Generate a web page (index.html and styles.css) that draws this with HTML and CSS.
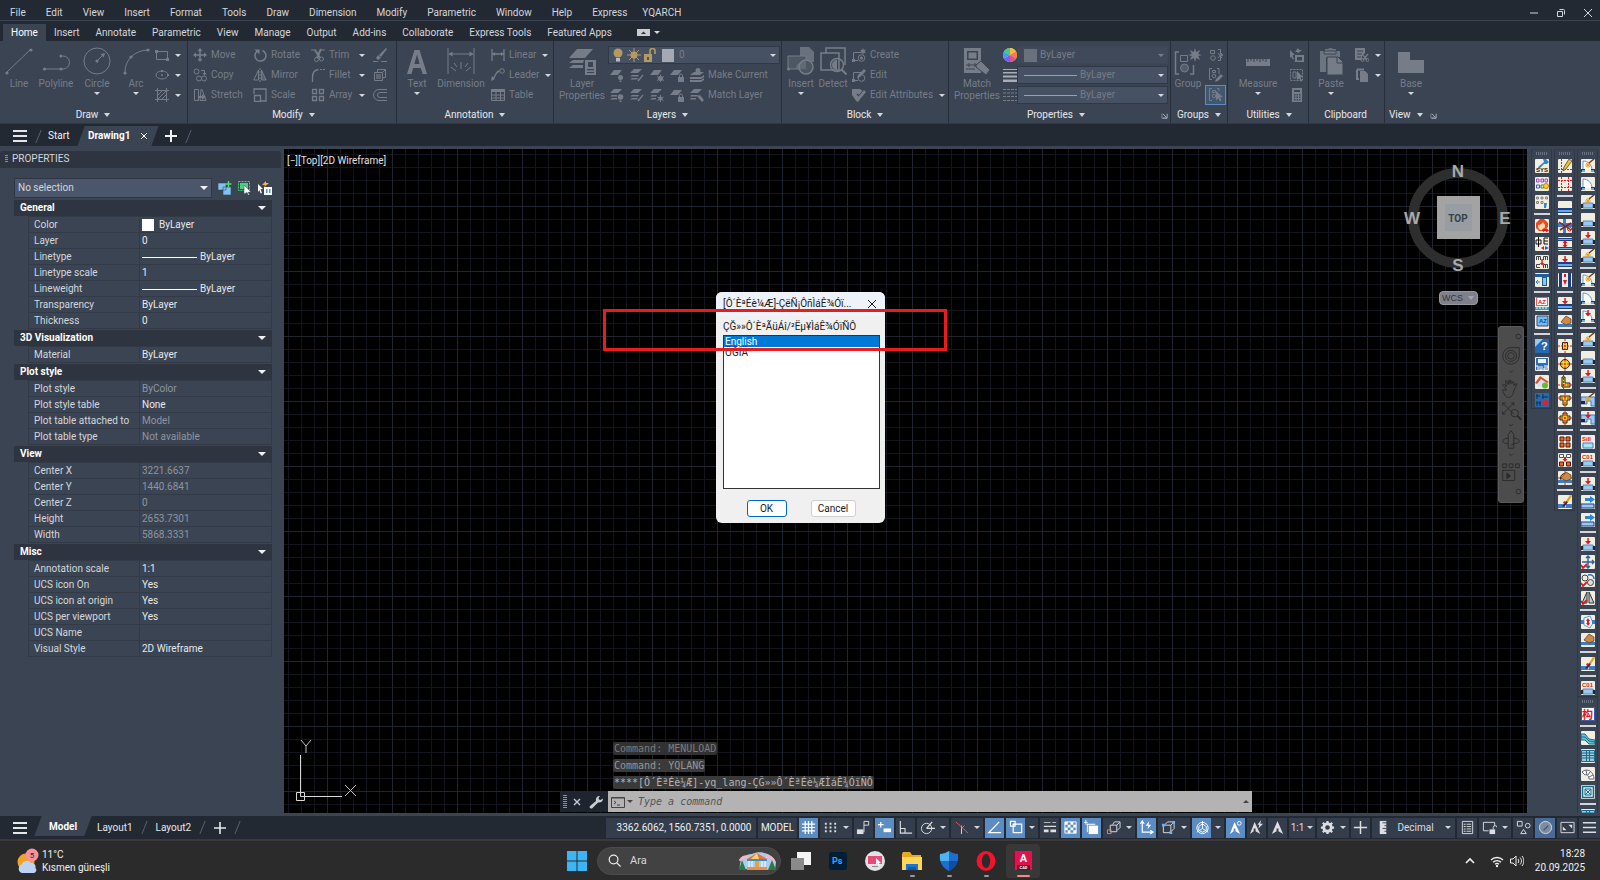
FILE: index.html
```html
<!DOCTYPE html>
<html lang="tr">
<head>
<meta charset="utf-8">
<title>Drawing1</title>
<link rel="stylesheet" href="styles.css">
</head>
<body>
<svg class="defs" aria-hidden="true">
  <!-- ribbon, large -->
  <symbol id="b-line" viewBox="0 0 28 28"><path d="M2 25 25 3" class="s"/><circle cx="2" cy="26" r="1.6"/><circle cx="26" cy="3" r="1.6"/></symbol>
  <symbol id="b-pline" viewBox="0 0 28 28"><path d="M3 22h18a6 6 0 0 0 0-13" class="s"/><circle cx="2.500" cy="22" r="1.600"/><circle cx="19" cy="22" r="1.600"/><circle cx="19" cy="9" r="1.600"/></symbol>
  <symbol id="b-circle" viewBox="0 0 28 28"><circle cx="14" cy="14" r="13" class="s"/><path d="M14 14 20 8" class="s"/><path d="m22 6-1.200 4.500-3.300-3.300z"/><circle cx="14" cy="14" r="1.600"/></symbol>
  <symbol id="b-arc" viewBox="0 0 28 28"><path d="M3 25C3 13 12 4 25 3" class="s"/><circle cx="3" cy="26" r="1.600"/><circle cx="9" cy="10" r="1.600"/><circle cx="26" cy="3" r="1.600"/></symbol>
  <symbol id="b-text" viewBox="0 0 28 28"><path d="M4 27 11.500 3h5L24 27h-4.500l-1.700-6h-7.600l-1.700 6zM11.300 17h5.400L14 7.500z"/></symbol>
  <symbol id="b-dim" viewBox="0 0 28 28"><path d="M1 1v26M27 1v26M2 7h24M14 22v-7M9 24l-5-4M19 24l5-4M10 20l-3-4M18 20l3-4" class="s"/><path d="m1.500 7 4-2.500v5zM26.500 7l-4-2.500v5z"/></symbol>
  <symbol id="b-layers" viewBox="0 0 28 28"><path d="M9 2h16l-8 9H1zM5 13h11l-1 3H1zM5 18h10v3H1zM9 1h16"/><path d="M17 13h11v15H17zM20 15v5h5v-5zM19 22v1.200h7V22zM19 25v1h7v-1z" fill-rule="evenodd"/></symbol>
  <symbol id="b-insert" viewBox="0 0 28 28"><path d="M13 0h9l5 5v10H13z" opacity=".8"/><path d="M1 9h18v13H1z" fill="#4d5663" stroke="currentColor"/><circle cx="19" cy="20" r="7" fill="#4d5663" stroke="currentColor" stroke-width="1.500"/><path d="M19 22H9a10 7 0 0 1 10-8z" opacity=".5"/><circle cx="1.500" cy="22" r="1.500"/></symbol>
  <symbol id="b-detect" viewBox="0 0 28 28"><path d="M7 6V1h19v17M2 6h18v17H2z" class="s" stroke-width="1.500"/><circle cx="18" cy="18" r="6.500" class="s" stroke-width="1.500"/><path d="m22.500 22.500 5 5" class="s" stroke-width="2"/><path d="M18 13v10a5 5 0 0 1 0-10z"/></symbol>
  <symbol id="b-match" viewBox="0 0 28 28"><path d="M1 1h17v25H1zM4 4v9h11V4z" fill-rule="evenodd"/><path d="M5.500 5.500h8v6h-8z"/><path d="M3 18h13M3 22h9" stroke="#3b4453"/><path d="M6 16v4M12 16v4" stroke="#3b4453"/><path d="m13 18 5-4 9 9-4 5-10-8z" stroke="#3b4453"/></symbol>
  <symbol id="b-group" viewBox="0 0 28 28"><path d="M5 5H1.500v22H5M16 27h3.500V18" class="s" stroke-width="1.500"/><path d="M6.500 8.500h7v6h-7z" class="s"/><circle cx="10.500" cy="21" r="4" fill="#545d6a" stroke="currentColor"/><path d="m21 1 1.200 4 4-2-2 4 3.800 1-3.800 1 2 4-4-2-1.200 4-1.200-4-4 2 2-4-3.800-1 3.800-1-2-4 4 2z"/></symbol>
  <symbol id="b-measure" viewBox="0 0 28 28"><path d="M2 12h24v7H2z"/><path d="M4 12v3M7 12v2M10 12v3M13 12v2M16 12v3M19 12v2M22 12v3" stroke="#3b4453"/></symbol>
  <symbol id="b-paste" viewBox="0 0 28 28"><path d="M3 4h5V2h3a3 2 0 0 1 5 0h3v2h4v6H9v15H3z" opacity=".85"/><path d="M7 4h12v3H7z" stroke="#3b4453"/><path d="M10 10h11l5 5v13H10z" stroke="#3b4453"/><path d="M20 10v6h6" stroke="#3b4453" fill="none"/></symbol>
  <symbol id="b-base" viewBox="0 0 28 28"><path d="M1 5h12v8h14v13H1z"/></symbol>
  <!-- ribbon, small -->
  <symbol id="s-rect" viewBox="0 0 14 14"><path d="M1.500 3.500h11v8h-11z" class="s"/><path d="M0 2h3v3H0zM11 10h3v3h-3z"/></symbol>
  <symbol id="s-ell" viewBox="0 0 14 14"><ellipse cx="7" cy="7" rx="6" ry="4" class="s"/><circle cx="7" cy="7" r="1"/><path d="M6 2h2v2H6zM12 6h2v2h-2z"/></symbol>
  <symbol id="s-hatch" viewBox="0 0 14 14"><path d="M2.500 2.500h9v9h-9zM0 2.500h14M0 11.500h14M2.500 0v14M11.500 0v14M3 7l4-4M3 11l8-8M7 11l4-4" class="s"/></symbol>
  <symbol id="s-move" viewBox="0 0 14 14"><path d="M7 1v12M1 7h12" class="s" stroke-width="1.500"/><path d="m7 0 2.500 3h-5zM7 14l2.500-3h-5zM0 7l3-2.500v5zM14 7l-3-2.500v5z"/></symbol>
  <symbol id="s-copy" viewBox="0 0 14 14"><circle cx="3.500" cy="3.500" r="2.500" class="s"/><circle cx="6" cy="10.500" r="2.500" class="s"/><circle cx="11" cy="10.500" r="2.500" class="s"/><path d="M8 2.500h3.500V6" class="s"/><path d="m11.500 7.500-2-2.500h4z"/></symbol>
  <symbol id="s-stretch" viewBox="0 0 14 14"><path d="M1.500 1.500h4v11h-4zM8 1.500h1l4 11H7z" class="s"/><path d="M5 8h4V6l4 3-4 3v-2H5z"/></symbol>
  <symbol id="s-rotate" viewBox="0 0 14 14"><path d="M9.500 2.500A5.500 5.500 0 1 1 4 3.300" class="s" stroke-width="1.500"/><path d="M1.500 1.500h5v5z"/></symbol>
  <symbol id="s-mirror" viewBox="0 0 14 14"><path d="M5.500 2v10H.8zM8.500 2v10h4.700z" class="s"/><path d="M8.500 2v10h4.700z" opacity=".5"/><path d="M7 0v14" class="s" stroke-dasharray="2 1"/></symbol>
  <symbol id="s-scale" viewBox="0 0 14 14"><path d="M1 6V1h12v12H8M1.500 7.500h6v6h-6z" class="s" stroke-width="1.300"/></symbol>
  <symbol id="s-trim" viewBox="0 0 14 14"><path d="M0 2h5M10 2h4" class="s"/><path d="m4 2 5 8M10 1 6 10" class="s" stroke-width="2"/><circle cx="5.500" cy="11.500" r="2" class="s"/><circle cx="10.500" cy="11" r="2" class="s"/></symbol>
  <symbol id="s-fillet" viewBox="0 0 14 14"><path d="M1.500 14V9c0-4 2-7 6-7.500" class="s" stroke-width="1.300"/><path d="M9 1.500h5" class="s" stroke-dasharray="2 1"/></symbol>
  <symbol id="s-array" viewBox="0 0 14 14"><path d="M1.500 1.500h4v4h-4zM8.500 1.500h4v4h-4zM1.500 8.500h4v4h-4zM8.500 8.500h4v4h-4z" class="s" stroke-width="1.300"/></symbol>
  <symbol id="s-erase" viewBox="0 0 14 14"><path d="M0 13h4l2 1H0zM8 13h6v1H8z"/><path d="m13 0 1 1-6 8-2-2zM5 7l3 3-3 2-2-2z"/></symbol>
  <symbol id="s-box" viewBox="0 0 14 14"><path d="M1.500 4.500h8v8h-8zM4.500 4V1.500h8v8H10M9.500 4.500l3-3" class="s"/><path d="M3 6h5v5H3z" opacity=".6"/></symbol>
  <symbol id="s-offset" viewBox="0 0 14 14"><path d="M14 1.500H6a5 5 0 0 0 0 11h8M14 4.500H7a2.500 2.500 0 0 0 0 5h7" class="s"/></symbol>
  <symbol id="s-linear" viewBox="0 0 14 14"><path d="M1 1v12M13 1v12M1 6h12" class="s" stroke-width="1.300"/><path d="m1 6 3-2v4zM13 6l-3-2v4z"/></symbol>
  <symbol id="s-leader" viewBox="0 0 14 14"><circle cx="11" cy="3" r="2.300" class="s"/><path d="M8.500 3C5 3 5 7 2 11" class="s" stroke-width="1.300"/><path d="m0 13 1-5 3 3z"/></symbol>
  <symbol id="s-table" viewBox="0 0 14 14"><path d="M0 1h14v3H0z"/><path d="M.5 1.500h13v11H.5zM.5 7h13M.5 10h13M5 4v9M9.500 4v9" class="s"/></symbol>
  <symbol id="s-lay" viewBox="0 0 14 14"><path d="M4 2h8L8 7H0z"/><circle cx="10.500" cy="9.500" r="2.500"/><path d="M9.500 12.500h2V14h-2z"/></symbol>
  <symbol id="s-layon" viewBox="0 0 14 14"><path d="M4 1h8L8 5H0zM2 7h5v1.500H0zM2 10h5v1.500H0z"/><circle cx="10.500" cy="9" r="2.800"/><path d="M9.500 12.500h2V14h-2z"/></symbol>
  <symbol id="s-lay2" viewBox="0 0 14 14"><path d="M4 1h8L8 5H0zM2 7h7l-1 1.500H0zM2 10h6l-1 1.500H0z"/><path d="m13 7-5 6M8 13l1-2" class="s" stroke-width="1.300"/></symbol>
  <symbol id="s-lay3" viewBox="0 0 14 14"><path d="M4 2h8L8 7H0z"/><circle cx="10.500" cy="10.500" r="2.500"/><path d="M10.500 6.500v7.500M7 8.500l7 4M7 12.500l7-4" class="s"/></symbol>
  <symbol id="s-thaw" viewBox="0 0 14 14"><path d="M4 1h8L8 5H0zM2 7h5L6 8.500H0zM2 10h4v1.500H0z"/><circle cx="10.500" cy="10.500" r="2"/><path d="M10.500 7v7M7.500 9l6 3.500M7.500 12.500l6-3.500" class="s"/></symbol>
  <symbol id="s-lay4" viewBox="0 0 14 14"><path d="M4 2h8L8 7H0zM8 9h6v5H8z"/><path d="M9.500 9V7.500a1.500 1.500 0 0 1 3 0V9" class="s"/></symbol>
  <symbol id="s-make" viewBox="0 0 14 14"><path d="M4 4h10l-4 3H0zM0 9h11l3-2v2l-3 2H0zM0 12h11l3-2v2l-3 2H0z"/><circle cx="8" cy="2.500" r="2.500"/></symbol>
  <symbol id="s-matchl" viewBox="0 0 14 14"><path d="M4 1h8L8 5H0zM1 7h7l-1 1.500H0zM1 10h5v1.500H0zM7 8l3-1 4 5-2 2z"/></symbol>
  <symbol id="s-create" viewBox="0 0 14 14"><path d="M9 4.500H1.500v8H6" class="s"/><circle cx="9.500" cy="10" r="3.300" class="s"/><circle cx="9.500" cy="10" r="1.500"/><path d="m11 0 .8 2 2-.5-1 2 1 1.500-2-.3L11 7l-.8-2.300-2 .3 1-1.500-1-2 2 .5z"/><path d="M0 11h3v3H0z"/></symbol>
  <symbol id="s-edit" viewBox="0 0 14 14"><path d="M9 4.500H1.500v8H6" class="s"/><circle cx="9.500" cy="10" r="3.300" class="s"/><path d="m12 1 2 2-6 6-3 1 1-3z"/><path d="M0 11h3v3H0z"/></symbol>
  <symbol id="s-attr" viewBox="0 0 14 14"><path d="M0 1h8l4 3-5 9-2 1L0 7z"/><path d="m5 6 2 2 5-6" stroke="#3b4453" stroke-width="1.500" fill="none"/><path d="m12 2 2 2-5 6-3 1 1-3z"/></symbol>
  <symbol id="s-lw" viewBox="0 0 14 14"><path d="M0 1h14v1H0zM0 4h14v1.500H0zM0 7.500h14v2H0zM0 11.500h14V14H0z"/></symbol>
  <symbol id="s-lt" viewBox="0 0 14 14"><path d="M0 1.500h14M0 5h14M0 8.500h14M0 12.500h14" class="s" stroke-dasharray="3 1"/></symbol>
  <symbol id="s-wheel" viewBox="0 0 14 14"><circle cx="7" cy="7" r="7" fill="#e8e04a"/><path d="M7 7V0a7 7 0 0 1 6 3.500z" fill="#f7b84b"/><path d="m7 7 6-3.500a7 7 0 0 1 0 7z" fill="#f57c4a"/><path d="m7 7 6 3.500A7 7 0 0 1 7 14z" fill="#e0508c"/><path d="M7 7v7a7 7 0 0 1-6-3.500z" fill="#7a5cf0"/><path d="m7 7-6 3.500a7 7 0 0 1 0-7z" fill="#3c9ef2"/><path d="M7 7 1 3.500A7 7 0 0 1 7 0z" fill="#43c78b"/></symbol>
  <symbol id="s-ungroup" viewBox="0 0 14 14"><path d="M1.500 2.500h4v3h-4zM9 1.500h2.500v4.500L14 7l-2.500 1v4.500H9M9 5l4 5M13 5l-4 5" class="s"/><circle cx="4" cy="10" r="2.300" class="s"/></symbol>
  <symbol id="s-gedit" viewBox="0 0 14 14"><path d="M3 .5H.5v11H3M8 .5h2V6M3.500 2.500h3v2h-3z" class="s"/><circle cx="5" cy="8" r="1.800" class="s"/><path d="m12 6 2 2-5 5-3 1 1-3z"/></symbol>
  <symbol id="s-gsel" viewBox="0 0 14 14"><path d="M3 .5H.5v12H3M8 .5h2V3M3.500 2.500h3v2h-3z" class="s"/><circle cx="5" cy="8" r="1.800" class="s"/><path d="m7 3 7 6-3 .5 1.500 3-1.500 1-1.700-3.200L7 12.500z"/></symbol>
  <symbol id="s-qsel" viewBox="0 0 14 14"><path d="m0 2 5 5-2.500.3L4 11l-1.300.6-1.400-3L0 10zM5 7h9v7H5z"/><path d="M7 9h5v3.500H7z" fill="#3b4453"/><path d="M8 0 5 4h3L7 6l5-4H9z"/></symbol>
  <symbol id="s-selall" viewBox="0 0 14 14"><path d="M.5 1.500h12v11H.5z" class="s" stroke-dasharray="2 1"/><path d="M3 4h3v6H3z" class="s"/><path d="m7 3 6 6-2.500.3L12 13l-1.300.6-1.400-3L7 12z"/></symbol>
  <symbol id="s-calc" viewBox="0 0 14 14"><path d="M2 0h10v14H2z"/><path d="M4 2h6v2H4zM4 6h1.500v1.500H4zM6.500 6H8v1.500H6.500zM9 6h1.500v1.500H9zM4 8.500h1.500V10H4zM6.500 8.500H8V10H6.500zM9 8.500h1.500V10H9zM4 11h1.500v1.500H4zM6.500 11H8v1.500H6.500zM9 11h1.500v1.500H9z" fill="#3b4453"/></symbol>
  <symbol id="s-cut" viewBox="0 0 14 14"><path d="M0 0h10v5L7 8v4H0z"/><path d="M2 3h6M2 6h5M2 9h4" stroke="#3b4453"/><path d="m7 6 5 6M13 6l-5 6" class="s" stroke-width="1.300"/><circle cx="7.500" cy="12" r="1.500" class="s"/><circle cx="12.500" cy="12" r="1.500" class="s"/></symbol>
  <symbol id="s-cpy" viewBox="0 0 14 14"><path d="M2 1.500V11h2M2 1.500h7" class="s" stroke-width="2"/><path d="M5 3h5l3 3v8H5z"/></symbol>
  <symbol id="s-launch" viewBox="0 0 8 8"><path d="M1 2v5h6" class="s" opacity=".6"/><path d="M2 2l4 4M7 2v5H2" class="s"/></symbol>
  <!-- right hand tool columns -->
  <symbol id="t-door" viewBox="0 0 14 14"><path d="M2 11V2c5 0 9 4 9 9" fill="#fff" stroke="#5b9bd5"/><path d="M0 10h4v3H0zM10 10h4v3h-4z" fill="#334"/><path d="M1 11h3v2H1zM10 11h3v2h-3z" fill="#6fa8dc"/></symbol>
  <symbol id="t-star" viewBox="0 0 14 14"><path d="M7 3v6M4 6h6M5 4l4 4M9 4 5 8" stroke="#f0a020"/><path d="m8 4 5-4" stroke="#7a3b1c" stroke-width="1.500"/></symbol>
  <symbol id="t-wall" viewBox="0 0 14 14"><path d="M2 8h10v5H2z" fill="#9cc7ee" stroke="#4a8ac4"/><path d="M0 9h2v4H0zM12 9h2v4h-2z" fill="#223"/></symbol>
  <symbol id="t-down" viewBox="0 0 14 14"><path d="M6.300 1h1.500v3H10L7 7.500 4 4h2.300z" fill="#e8141c"/></symbol>
  <symbol id="t-h" viewBox="0 0 14 14"><path d="M0 7h14v2H0zM0 11h14v1H0z" fill="#16408a"/><path d="M0 9h14v2H0z" fill="#6fa8dc"/></symbol>
  <symbol id="t-hh" viewBox="0 0 14 14"><path d="M0 1h14v3H0zM0 10h14v3H0z" fill="#16408a"/><path d="M0 2h14v1H0zM0 11h14v1H0z" fill="#6fa8dc"/><path d="m7 3 2.500 3H8v2h1.500L7 11 4.500 8H6V6H4.500z" fill="#e8141c"/></symbol>
  <symbol id="t-vv" viewBox="0 0 14 14"><path d="M1 0h3v14H1zM10 0h3v14h-3z" fill="#16408a"/><path d="M6 1h2v3H6zM5 7h4L7 12z" fill="#e8141c"/></symbol>
  <symbol id="t-brush" viewBox="0 0 14 14"><path d="M0 9h6l2 4H0zM8 9h6v4H8z" fill="#3c7cc8"/><path d="m12 0 2 1-4 6-2-1z" fill="#e8a020"/><path d="m8 6 2 1-3 4-3 1z" fill="#2b2b2b"/><path d="m6 6 2 1-1 2-2-1z" fill="#e8141c"/></symbol>
  <symbol id="t-grid" viewBox="0 0 14 14"><path d="M0 3.500h14M0 10.500h14M3.500 0v14M10.500 0v14" stroke="#e8141c" stroke-dasharray="2 1"/></symbol>
  <symbol id="t-pencil" viewBox="0 0 14 14"><path d="M3.500 0v14M0 10.500h14" stroke="#e8141c" stroke-dasharray="2 1"/><path d="m11 0 3 2-6 8-3 2 1-4z" fill="#f0c030" stroke="#333" stroke-width=".7"/></symbol>
  <symbol id="t-hand" viewBox="0 0 14 14"><path d="M0 9h14v3H0z" fill="#3c7cc8"/><path d="m3 7 5-6 5 3v4l-5 2z" fill="#c98a4a" stroke="#5a3412" stroke-width=".7"/></symbol>
  <symbol id="t-cross" viewBox="0 0 14 14"><path d="M5 2h4v3h3v4H9v3H5V9H2V5h3z" fill="#f0c020" stroke="#222"/><path d="M0 7h14M7 0v14" stroke="#e8141c" stroke-dasharray="2 1"/></symbol>
  <symbol id="t-sq" viewBox="0 0 14 14"><path d="M4.500 3.500h5v7h-5z" fill="#f0d820" stroke="#222"/><path d="M0 7h14M7 0v14" stroke="#e8141c" stroke-dasharray="2 1"/></symbol>
  <symbol id="t-circ" viewBox="0 0 14 14"><circle cx="7" cy="7" r="4.500" fill="#f0d820" stroke="#222"/><path d="M0 7h14M7 0v14" stroke="#e8141c" stroke-dasharray="2 1"/></symbol>
  <symbol id="t-l" viewBox="0 0 14 14"><path d="M4 2h3v6h5v4H4z" fill="#f0d820" stroke="#222"/><path d="M0 10h14M5.500 0v14" stroke="#e8141c" stroke-dasharray="2 1"/></symbol>
  <symbol id="t-t" viewBox="0 0 14 14"><path d="M2 3h10v4H9v5H5V7H2z" fill="#f0d820" stroke="#222"/><path d="M0 5h14M7 0v14" stroke="#e8141c" stroke-dasharray="2 1"/></symbol>
  <symbol id="t-four" viewBox="0 0 14 14"><path d="M2 2h4v4H2zM8 2h4v4H8zM2 8h4v4H2zM8 8h4v4H8z" fill="#e86a20" stroke="#5a1408"/></symbol>
  <symbol id="t-three" viewBox="0 0 14 14"><path d="M1.500 1.500h4v3h-4zM8.500 1.500h4v3h-4z" fill="#fff" stroke="#555"/><path d="M1.500 9h4v4h-4zM8.500 9h4v4h-4z" fill="#e86a20" stroke="#5a1408"/><path d="M6 4h2v2h1.500L7 9 4.500 6H6z" fill="#e8141c"/></symbol>
  <symbol id="t-scis" viewBox="0 0 14 14"><path d="M0 4h14v4H0zM5 0h3v14H5z" fill="#3c7cc8"/><path d="m1 3 12 8M2 11l11-7" stroke="#8a2010" stroke-width="1.500"/><circle cx="11.500" cy="10" r="2" fill="none" stroke="#e8141c"/></symbol>
  <symbol id="t-wrench" viewBox="0 0 14 14"><path d="m3 8 6-5-1-3h3l3 3-2 2-3 0-5 5z" fill="#2c86d8"/></symbol>
  <symbol id="t-blocks" viewBox="0 0 14 14"><path d="M1.500 2h2.500v3H1.500zM6 2h2.500v3H6zM10 2h2.500v3H10z" fill="none" stroke="#a040c0"/><path d="M1.500 8h3v3h-3z" fill="none" stroke="#2a60d0"/><path d="M6 8h2.500v3H6z" fill="none" stroke="#209040"/><circle cx="11" cy="9" r="2.500" fill="#ffd020" stroke="#d08010"/></symbol>
  <symbol id="t-blocks2" viewBox="0 0 14 14"><path d="M1.500 2h2v2h-2zM6 2h2v2H6zM10.500 2h2v2h-2zM1.500 6.500h2v2h-2zM6 6.500h2v2H6z" fill="#ccc" stroke="#888"/><path d="M9 8h3l-1 5H9z" fill="#2c86d8"/></symbol>
  <symbol id="t-face" viewBox="0 0 14 14"><path d="M1 9V4l4-4h4l4 4v4l-5 4H4z" fill="#e84a20"/><path d="M3 6c3 0 4-2 5-3 1 2 2 2 2 4 0 2-2 4-4 4S3 9 3 6z" fill="#ffd8b0"/><path d="m7 11 2-2v1h2V9l3 2.500-3 2V12H9v1.500z" fill="#e8141c"/></symbol>
  <symbol id="t-zh" viewBox="0 0 14 14"><path d="M1 3h5v4H1zM3.500 0v10M9 1h4M9 4h4M9 7h4M9 1v6" stroke="#111" fill="none"/><path d="m6 11 3-2v4z" fill="#e8141c"/><path d="m14 11-4-2v4z" fill="#2c60d8"/></symbol>
  <symbol id="t-mm" viewBox="0 0 14 14"><path d="M1.500 5V1.500h4V5M3.500 2v3M8.500 5V1.500h4V5M10.500 2v3M5 9.500H1.500v3H5M8.500 13V9.500h4V13M10.500 10v3" stroke="#444" fill="none"/><path d="M6.300 4h1.500v4h1.500L7 10.500 4.700 8h1.600z" fill="#e8141c"/></symbol>
  <symbol id="t-panel" viewBox="0 0 14 14"><path d="M0 1h14v3H0zM7 4h5v9H7z" fill="#1c5f9c"/><path d="M8 5h3v7H8z" fill="#8ec6ee"/><path d="M1 9h4M3 7 1 9l2 2" stroke="#2c86d8" fill="none"/></symbol>
  <symbol id="t-az" viewBox="0 0 14 14"><path d="M1.500.500h11v8h-11z" fill="#fff" stroke="#e8141c" stroke-width=".7"/><path d="M0 10h14v3H0z" fill="#2c9cc8"/><path d="M2 10v2M5 10v2M8 10v2M11 10v2" stroke="#fff"/></symbol>
  <symbol id="t-az2" viewBox="0 0 14 14"><path d="M2 1h11v10H2z" fill="#6fc0ee" stroke="#446"/><path d="m0 14 3-3v3z"/></symbol>
  <symbol id="t-help" viewBox="0 0 14 14"><path d="M0 0h14v14H0z" fill="#2868b0"/><path d="M0 0h8L0 8z" fill="#9cc7ee"/></symbol>
  <symbol id="t-save" viewBox="0 0 14 14"><path d="M1 1h12v12H1z" fill="#2f6fb8"/><path d="M3 2h8v4H3z" fill="#e8f2fb"/><path d="M0 9h3v4M5 9v4h2V9M9 9h4v2H9v2h4" stroke="#fff" fill="none"/></symbol>
  <symbol id="t-house" viewBox="0 0 14 14"><path d="M1 8 6 2l7 5v5H3z" fill="#cfe3f5"/><path d="M0 8 5 1l9 6-2 1-6-4-4 5z" fill="#e0502a"/><circle cx="10" cy="10.500" r="3" fill="#6cb82c"/></symbol>
  <symbol id="t-blue" viewBox="0 0 14 14"><path d="M0 0h14v14H0z" fill="#2a6aa8"/><path d="M2 1v5M1 3h4M8 1v5M7 4h6M2 8v5M5 8v5M1 10h5" stroke="#0c3060"/><circle cx="10.500" cy="10" r="3" fill="#e02030"/></symbol>
  <symbol id="t-corner" viewBox="0 0 14 14"><path d="M0 7V4h14v9h-4V8H6v3H0z" fill="#9cc7ee" stroke="#3c7cc8"/><path d="M0 8h4v3H0z" fill="#223"/></symbol>
  <symbol id="t-sill" viewBox="0 0 14 14"><path d="M2 8h10v5H2z" fill="#a8e4f4" stroke="#3c7cc8"/></symbol>
  <symbol id="t-right" viewBox="0 0 14 14"><path d="M4 3h5V1l5 3.500L9 8V6H4z" fill="#2c86d8"/><path d="M0 9h13v4H0z" fill="#9cc7ee" stroke="#16408a"/></symbol>
  <symbol id="t-mv" viewBox="0 0 14 14"><path d="M7 1v12M1 7h12M5 3l2-2 2 2M11 5l2 2-2 2M5 11l2 2 2-2" stroke="#2f5f98" fill="none" stroke-width="1.400"/><path d="m0 10 2 3 4-4" stroke="#e8141c" fill="none" stroke-width="1.800"/></symbol>
  <symbol id="t-rot" viewBox="0 0 14 14"><circle cx="4" cy="5" r="3" fill="none" stroke="#444"/><circle cx="9.500" cy="9.500" r="3" fill="#ddd" stroke="#444"/><path d="M7 2c4-1 6 1 6 4" stroke="#2f6fb8" fill="none" stroke-width="1.500"/><path d="m0 10 2 3 4-4" stroke="#e8141c" fill="none" stroke-width="1.800"/></symbol>
  <symbol id="t-mir" viewBox="0 0 14 14"><path d="M6 1v11H1zM8 1v11h5z" fill="#bcd" stroke="#333"/><path d="m0 10 2 3 4-4" stroke="#e8141c" fill="none" stroke-width="1.800"/></symbol>
  <symbol id="t-ru" viewBox="0 0 14 14"><path d="M3 3 9 1l3 7-3 5-6-3z" fill="#fff" stroke="#5b9bd5"/><path d="M0 5h3v4H0zM11 5h3v4h-3z" fill="#3c7cc8"/><path d="m7 3 2 3H8v2h1l-2 3-2-3h1V6H5z" fill="#e8141c"/></symbol>
  <symbol id="t-stair" viewBox="0 0 14 14"><path d="m0 3 4 0 4 5 6 1v4H8L4 9H0z" fill="#5cc8e0" stroke="#1c6a88"/><path d="m0 6 4 0 4 4 6 1" stroke="#1c6a88" fill="none"/></symbol>
  <symbol id="t-stairs2" viewBox="0 0 14 14"><path d="M.5 1.500h13v11H.5z" fill="#9ccbe0" stroke="#1c6a88"/><path d="M0 4h14M0 6.500h14M0 9h14M5.500 1v12M8.500 1v12" stroke="#1c6a88"/></symbol>
  <symbol id="t-fan" viewBox="0 0 14 14"><path d="M1 5C6 0 13 5 13 12H8C8 9 6 7 4 8z" fill="#fff" stroke="#667"/><path d="m5 3 1 5M9 5 7 8M12 8 8 10" stroke="#667"/></symbol>
  <symbol id="t-lift" viewBox="0 0 14 14"><path d="M1.500 1.500h11v11h-11z" fill="#d8eef8" stroke="#1c6a88" stroke-width="1.500"/><path d="m4 4 6 6M10 4l-6 6M4 4h6v6H4z" stroke="#1c6a88" fill="none"/></symbol>
  <!-- status bar -->
  <symbol id="u-grid" viewBox="0 0 16 16"><path d="M4.500 1v14M8 1v14M11.500 1v14M1 4.500h14M1 8h14M1 11.500h14" class="s" stroke-width="1.300"/></symbol>
  <symbol id="u-dots" viewBox="0 0 16 16"><path d="M2 3h2v2H2zM7 3h2v2H7zM12 3h2v2h-2zM2 7h2v2H2zM7 7h2v2H7zM12 7h2v2h-2zM2 11h2v2H2zM7 11h2v2H7zM12 11h2v2h-2z"/></symbol>
  <symbol id="u-infer" viewBox="0 0 16 16"><path d="M1 10h7v5H1z"/><path d="M8.500 13V1.500h5v4h-5" class="s"/></symbol>
  <symbol id="u-dyn" viewBox="0 0 16 16"><path d="M1 5h6M4 2v6" class="s" stroke-width="1.300"/><path d="M7 9h8v4H7z"/></symbol>
  <symbol id="u-ortho" viewBox="0 0 16 16"><path d="M2.500 1v13H15M2.500 9h5v5" class="s" stroke-width="1.200"/></symbol>
  <symbol id="u-polar" viewBox="0 0 16 16"><circle cx="7" cy="9" r="5.500" class="s"/><path d="M7 9h9M7 9l6-7" class="s" stroke-width="1.300"/></symbol>
  <symbol id="u-iso" viewBox="0 0 16 16"><path d="M8 6v9" class="s"/><path d="m2 2 13 12" stroke="#e05a5a"/><path d="m11 6-3 3" stroke="#5ac85a"/></symbol>
  <symbol id="u-ang" viewBox="0 0 16 16"><path d="M13 2 2 13.500h13" class="s" stroke-width="1.400"/></symbol>
  <symbol id="u-osnap" viewBox="0 0 16 16"><path d="M4.500 4.500h9v9h-9zM1.500 1.500h5v5h-5z" class="s" stroke-width="1.300"/></symbol>
  <symbol id="u-lw" viewBox="0 0 16 16"><path d="M2 2h7v1H2zM11 2h4v1h-4zM2 6h13v1.500H2zM2 10h5v3H2zM9 10h6v3H9z"/></symbol>
  <symbol id="u-trans" viewBox="0 0 16 16"><path d="M2 2h12v12H2z" class="s"/><path d="M2 2h3v3H2zM8 2h3v3H8zM5 5h3v3H5zM11 5h3v3h-3zM2 8h3v3H2zM8 8h3v3H8zM5 11h3v3H5zM11 11h3v3h-3z"/></symbol>
  <symbol id="u-cyc" viewBox="0 0 16 16"><path d="M5 6h10v9H5z"/><path d="M3 4h9v1H4v8H3zM0 2h4v1H0z"/><path d="M2 0v5" class="s"/></symbol>
  <symbol id="u-cube" viewBox="0 0 16 16"><path d="M4.500 5.500h7v7h-7zM7 5l2-3h6v6l-3 3M11.500 5.500l3-3" class="s"/><path d="M1.500 10.500h4v4h-4z" fill="none" stroke="#e08a4a"/></symbol>
  <symbol id="u-ucs" viewBox="0 0 16 16"><path d="M3.500 2v11H15M1.500 4l2-3 2 3M12 11l3 2-3 2" class="s" stroke-width="1.300"/><path d="m11 1-4 5h3l-1 4 4-5h-3z"/></symbol>
  <symbol id="u-cube2" viewBox="0 0 16 16"><path d="M2.500 5.500h8v8h-8zM4 5l3-3h7v7l-3 3M10.500 5.500l3-3" class="s"/><path d="M1 4h3v3H1zM9 12h3v3H9zM12 1h3v3h-3z" fill="#6db3f2"/></symbol>
  <symbol id="u-orb" viewBox="0 0 16 16"><circle cx="8" cy="8.500" r="6" class="s"/><path d="M8 1v8l-6 4M8 9l6 4M4 7l4-3 4 3v4l-4 2-4-2z" class="s"/></symbol>
  <symbol id="u-ann" viewBox="0 0 16 16"><path d="M8 1 2 15l5-3V9h2v3l5 3z"/></symbol>
  <symbol id="u-ann1" viewBox="0 0 16 16"><path d="M7 2 2 15l4-3V9h2v3l5 3z"/><circle cx="12" cy="3.500" r="2" class="s"/></symbol>
  <symbol id="u-ann2" viewBox="0 0 16 16"><path d="M6 2 1 15l4-3V9h2v3l5 3z"/><path d="m13 0-4 5h2l-1 4 5-5h-3z"/></symbol>
  <symbol id="u-gear" viewBox="0 0 16 16"><circle cx="8" cy="8" r="4" fill="none" stroke="currentColor" stroke-width="3"/><path d="M8 1v3M8 12v3M1 8h3M12 8h3M3 3l2 2M11 11l2 2M13 3l-2 2M5 11l-2 2" stroke="currentColor" stroke-width="2.400"/></symbol>
  <symbol id="u-plus" viewBox="0 0 16 16"><path d="M8 1v14M1 8h14" class="s" stroke-width="1.600"/></symbol>
  <symbol id="u-ruler" viewBox="0 0 16 16"><path d="M4 1h7v14H4z"/><path d="M7 3h5M9 6h3M7 9h5M9 12h3" stroke="#3b4453"/></symbol>
  <symbol id="u-qp" viewBox="0 0 16 16"><path d="M2.500 1.500h11v13h-11zM7 4.500h5M7 7h5M7 9.500h5M7 12h5" class="s"/><path d="M4 4h2v1H4zM4 6.500h2v1H4zM4 9h2v1H4zM4 11.500h2v1H4z"/></symbol>
  <symbol id="u-lock" viewBox="0 0 16 16"><path d="M7 11.500H1.500v-9h12V6" class="s"/><path d="M8 10h6v5H8z"/><path d="M12 10V8a2 2 0 0 1 4 0" class="s"/></symbol>
  <symbol id="u-iso2" viewBox="0 0 16 16"><path d="M1.500 1.500h5v5h-5zM8 10l3 4.500H5z" class="s"/><circle cx="12.500" cy="6" r="2.500" class="s"/></symbol>
  <symbol id="u-perf" viewBox="0 0 16 16"><circle cx="8" cy="8" r="6.500" fill="#7d8ea3" stroke="currentColor"/><path d="m6 11 5-5" stroke="#46566b" stroke-width="1.400"/></symbol>
  <symbol id="u-full" viewBox="0 0 16 16"><path d="M1 2.500h14v11H1z" class="s"/><path d="M9 5h4v4zM3 7v4h4z"/></symbol>
  <symbol id="u-menu" viewBox="0 0 16 16"><path d="M1 3h14M1 8h14M1 13h14" class="s" stroke-width="1.600"/></symbol>
</svg>

<nav class="menubar" aria-label="Menu">
  <a href="#">File</a><a href="#">Edit</a><a href="#">View</a><a href="#">Insert</a><a href="#">Format</a><a href="#">Tools</a><a href="#">Draw</a><a href="#">Dimension</a><a href="#">Modify</a><a href="#">Parametric</a><a href="#">Window</a><a href="#">Help</a><a href="#">Express</a><a href="#" class="tight">YQARCH</a>
  <div class="winctl">
    <button aria-label="Minimize"><svg viewBox="0 0 10 10"><path d="M1 5h8" class="s"/></svg></button>
    <button aria-label="Restore"><svg viewBox="0 0 10 10"><path d="M1.500 3.500h5v5h-5zM3.500 1.500h4a1 1 0 0 1 1 1v4" class="s"/></svg></button>
    <button aria-label="Close"><svg viewBox="0 0 10 10"><path d="m1 1 8 8M9 1 1 9" class="s"/></svg></button>
  </div>
</nav>

<nav class="tabs" aria-label="Ribbon tabs">
  <a href="#" class="on">Home</a><a href="#">Insert</a><a href="#">Annotate</a><a href="#">Parametric</a><a href="#">View</a><a href="#">Manage</a><a href="#">Output</a><a href="#">Add-ins</a><a href="#">Collaborate</a><a href="#">Express Tools</a><a href="#">Featured Apps</a>
  <button class="minirib" aria-label="Minimize ribbon"><svg viewBox="0 0 13 7"><path d="M0 0h13v7H0z" fill="#c9ccd1"/><path d="m4 5 2.500-2.500L9 5z" fill="#333"/></svg><span class="caret"></span></button>
</nav>

<section class="ribbon">
  <div class="panel p-draw">
    <div class="body">
      <button class="big w36"><svg><use href="#b-line"/></svg>Line</button>
      <button class="big w38"><svg><use href="#b-pline"/></svg>Polyline</button>
      <button class="big w44"><svg><use href="#b-circle"/></svg>Circle<i class="caret"></i></button>
      <button class="big w34"><svg><use href="#b-arc"/></svg>Arc<i class="caret"></i></button>
      <div class="col pad">
        <button class="sm" aria-label="Rectangle"><svg><use href="#s-rect"/></svg><i class="caret"></i></button>
        <button class="sm" aria-label="Ellipse"><svg><use href="#s-ell"/></svg><i class="caret"></i></button>
        <button class="sm" aria-label="Hatch"><svg><use href="#s-hatch"/></svg><i class="caret"></i></button>
      </div>
    </div>
    <button class="ttl">Draw<i class="caret"></i></button>
  </div>
  <div class="panel p-modify">
    <div class="body">
      <div class="col w60"><button class="sm"><svg><use href="#s-move"/></svg>Move</button><button class="sm"><svg><use href="#s-copy"/></svg>Copy</button><button class="sm"><svg><use href="#s-stretch"/></svg>Stretch</button></div>
      <div class="col w58"><button class="sm"><svg><use href="#s-rotate"/></svg>Rotate</button><button class="sm"><svg><use href="#s-mirror"/></svg>Mirror</button><button class="sm"><svg><use href="#s-scale"/></svg>Scale</button></div>
      <div class="col w62 spread"><button class="sm"><svg><use href="#s-trim"/></svg>Trim<i class="caret"></i></button><button class="sm"><svg><use href="#s-fillet"/></svg>Fillet<i class="caret"></i></button><button class="sm"><svg><use href="#s-array"/></svg>Array<i class="caret"></i></button></div>
      <div class="col"><button class="sm" aria-label="Erase"><svg><use href="#s-erase"/></svg></button><button class="sm" aria-label="Explode"><svg><use href="#s-box"/></svg></button><button class="sm" aria-label="Offset"><svg><use href="#s-offset"/></svg></button></div>
    </div>
    <button class="ttl">Modify<i class="caret"></i></button>
  </div>
  <div class="panel p-anno">
    <div class="body">
      <button class="big w36"><svg><use href="#b-text"/></svg>Text<i class="caret"></i></button>
      <button class="big w52"><svg><use href="#b-dim"/></svg>Dimension</button>
      <div class="col wide"><button class="sm"><svg><use href="#s-linear"/></svg>Linear<i class="caret"></i></button><button class="sm"><svg><use href="#s-leader"/></svg>Leader<i class="caret"></i></button><button class="sm"><svg><use href="#s-table"/></svg>Table</button></div>
    </div>
    <button class="ttl">Annotation<i class="caret"></i></button>
  </div>
  <div class="panel p-layers">
    <div class="body">
      <button class="big w52"><svg><use href="#b-layers"/></svg>Layer<br>Properties</button>
      <div class="col">
        <div class="combo layer">
          <svg viewBox="0 0 14 14" class="amber"><circle cx="7" cy="5" r="4.500"/><path d="M5 10h4v3.500H5z" fill="#b8bcc4"/></svg>
          <svg viewBox="0 0 14 14" class="amber"><circle cx="7" cy="7" r="3.500"/><path d="M7 0v14M0 7h14M2 2l10 10M12 2 2 12" stroke="currentColor"/></svg>
          <svg viewBox="0 0 14 14" class="amber"><path d="M1 6h8v8H1z"/><path d="M7 6V3a2.500 2.500 0 0 1 5 0v3" fill="none" stroke="currentColor" stroke-width="1.600"/><path d="M4 9h2v3H4z" fill="#4a5568"/></svg>
          <span class="swatch light"></span>
          <select aria-label="Layer"><option>0</option></select><i class="caret"></i>
        </div>
        <div class="icons"><button class="sm" aria-label="Off"><svg><use href="#s-lay"/></svg></button><button class="sm" aria-label="Isolate"><svg><use href="#s-lay2"/></svg></button><button class="sm" aria-label="Freeze"><svg><use href="#s-lay3"/></svg></button><button class="sm" aria-label="Lock"><svg><use href="#s-lay4"/></svg></button><button class="sm"><svg><use href="#s-make"/></svg>Make Current</button></div>
        <div class="icons"><button class="sm" aria-label="Turn all on"><svg><use href="#s-layon"/></svg></button><button class="sm" aria-label="Unisolate"><svg><use href="#s-lay2"/></svg></button><button class="sm" aria-label="Thaw"><svg><use href="#s-thaw"/></svg></button><button class="sm" aria-label="Unlock"><svg><use href="#s-lay4"/></svg></button><button class="sm"><svg><use href="#s-matchl"/></svg>Match Layer</button></div>
      </div>
    </div>
    <button class="ttl">Layers<i class="caret"></i></button>
  </div>
  <div class="panel p-block">
    <div class="body">
      <button class="big w34"><svg><use href="#b-insert"/></svg>Insert<i class="caret"></i></button>
      <button class="big w30"><svg><use href="#b-detect"/></svg>Detect</button>
      <div class="col wide"><button class="sm"><svg><use href="#s-create"/></svg>Create</button><button class="sm"><svg><use href="#s-edit"/></svg>Edit</button><button class="sm"><svg><use href="#s-attr"/></svg>Edit Attributes<i class="caret"></i></button></div>
    </div>
    <button class="ttl">Block<i class="caret"></i></button>
  </div>
  <div class="panel p-props">
    <div class="body">
      <button class="big w52"><svg><use href="#b-match"/></svg>Match<br>Properties</button>
      <div class="col"><button class="sm" aria-label="Color"><svg><use href="#s-wheel"/></svg></button><button class="sm bright" aria-label="Lineweight"><svg><use href="#s-lw"/></svg></button><button class="sm" aria-label="Linetype"><svg><use href="#s-lt"/></svg></button></div>
      <div class="col grow">
        <div class="combo off"><span class="swatch"></span><select aria-label="Object color"><option>ByLayer</option></select><i class="caret"></i></div>
        <div class="combo"><span class="rule"></span><select aria-label="Object lineweight"><option>ByLayer</option></select><i class="caret"></i></div>
        <div class="combo"><span class="rule"></span><select aria-label="Object linetype"><option>ByLayer</option></select><i class="caret"></i></div>
      </div>
    </div>
    <div class="ttlrow"><button class="ttl">Properties<i class="caret"></i></button><button class="launch" aria-label="Properties palette"><svg><use href="#s-launch"/></svg></button></div>
  </div>
  <div class="panel p-groups">
    <div class="body">
      <button class="big w34"><svg><use href="#b-group"/></svg>Group</button>
      <div class="col"><button class="sm sq" aria-label="Ungroup"><svg><use href="#s-ungroup"/></svg></button><button class="sm sq" aria-label="Group edit"><svg><use href="#s-gedit"/></svg></button><button class="sm sq sel" aria-label="Group selection"><svg><use href="#s-gsel"/></svg></button></div>
    </div>
    <button class="ttl">Groups<i class="caret"></i></button>
  </div>
  <div class="panel p-util">
    <div class="body">
      <button class="big w52"><svg><use href="#b-measure"/></svg>Measure<i class="caret"></i></button>
      <div class="col pad"><button class="sm sq" aria-label="Quick select"><svg><use href="#s-qsel"/></svg></button><button class="sm sq" aria-label="Select all"><svg><use href="#s-selall"/></svg></button><button class="sm sq" aria-label="Calculator"><svg><use href="#s-calc"/></svg></button></div>
    </div>
    <button class="ttl">Utilities<i class="caret"></i></button>
  </div>
  <div class="panel p-clip">
    <div class="body">
      <button class="big w44"><svg><use href="#b-paste"/></svg>Paste<i class="caret"></i></button>
      <div class="col pad"><button class="sm" aria-label="Cut"><svg><use href="#s-cut"/></svg><i class="caret"></i></button><button class="sm" aria-label="Copy clip"><svg><use href="#s-cpy"/></svg><i class="caret"></i></button></div>
    </div>
    <div class="ttl">Clipboard</div>
  </div>
  <div class="panel p-view">
    <div class="body"><button class="big w52"><svg><use href="#b-base"/></svg>Base<i class="caret"></i></button></div>
    <div class="ttlrow left"><button class="ttl">View<i class="caret"></i></button><button class="launch" aria-label="View options"><svg><use href="#s-launch"/></svg></button></div>
  </div>
</section>

<nav class="doctabs" aria-label="Files">
  <button class="burger" aria-label="Files menu"><i></i><i></i><i></i></button><span class="slash"></span>
  <a href="#" class="start">Start</a>
  <a href="#" class="skew doc"><b>Drawing1</b><svg viewBox="0 0 8 8"><path d="m1 1 6 6M7 1 1 7" class="s"/></svg></a>
  <button class="plus" aria-label="New drawing"><svg viewBox="0 0 12 12"><path d="M6 0v12M0 6h12" class="s" stroke-width="2"/></svg></button><span class="slash"></span>
</nav>

<main class="work">
  <aside class="palette">
    <h2><span class="grip v"></span>PROPERTIES</h2>
    <div class="pbody">
      <div class="selrow">
        <div class="picker"><select aria-label="Selection"><option>No selection</option></select><i class="caret"></i></div>
        <button aria-label="Toggle pickadd"><svg viewBox="0 0 14 14"><path d="M0 2h8v7H0zM5 6h8v8H5z" fill="#7ec3f5" stroke="#3b4453" stroke-width=".6"/><path d="M10.500 0v6M7.500 3h6" stroke="#4ce06c" stroke-width="1.400"/></svg></button>
        <button aria-label="Select objects"><svg viewBox="0 0 14 14"><path d="M.5.500h11v9H.5z" fill="none" stroke="#4ccf7c" stroke-dasharray="2 1"/><path d="M2 2h8v6H2z" fill="#4ccf7c"/><path d="m6 4 7 7-3 .3 1.500 2.400-1.200.6L9 11.500 6 13z" fill="#fff" stroke="#3b4453" stroke-width=".5"/></svg></button>
        <button aria-label="Quick select"><svg viewBox="0 0 14 14"><path d="m0 3 5 5-2.500.3L4 12l-1.300.6L1.300 9 0 11z" fill="#fff"/><path d="M6 6h8v8H6z" fill="#fff"/><path d="M8 8h1.500v4H8zM11 8h1.500v4H11z" fill="#4a9ae0"/><path d="M8 0 4 4h3L6 6l5-4H8z" fill="#f5b942"/></svg></button>
      </div>
      <h3>General<i class="caret"></i></h3>
      <table><tr><th>Color</th><td><span class="swatch white"></span>ByLayer</td></tr><tr><th>Layer</th><td>0</td></tr><tr><th>Linetype</th><td><span class="rule"></span>ByLayer</td></tr><tr><th>Linetype scale</th><td>1</td></tr><tr><th>Lineweight</th><td><span class="rule"></span>ByLayer</td></tr><tr><th>Transparency</th><td>ByLayer</td></tr><tr><th>Thickness</th><td>0</td></tr></table>
      <h3>3D Visualization<i class="caret"></i></h3>
      <table><tr><th>Material</th><td>ByLayer</td></tr></table>
      <h3>Plot style<i class="caret"></i></h3>
      <table><tr><th>Plot style</th><td class="ro">ByColor</td></tr><tr><th>Plot style table</th><td>None</td></tr><tr><th>Plot table attached to</th><td class="ro">Model</td></tr><tr><th>Plot table type</th><td class="ro">Not available</td></tr></table>
      <h3>View<i class="caret"></i></h3>
      <table><tr><th>Center X</th><td class="ro">3221.6637</td></tr><tr><th>Center Y</th><td class="ro">1440.6841</td></tr><tr><th>Center Z</th><td class="ro">0</td></tr><tr><th>Height</th><td class="ro">2653.7301</td></tr><tr><th>Width</th><td class="ro">5868.3331</td></tr></table>
      <h3>Misc<i class="caret"></i></h3>
      <table><tr><th>Annotation scale</th><td>1:1</td></tr><tr><th>UCS icon On</th><td>Yes</td></tr><tr><th>UCS icon at origin</th><td>Yes</td></tr><tr><th>UCS per viewport</th><td>Yes</td></tr><tr><th>UCS Name</th><td></td></tr><tr><th>Visual Style</th><td>2D Wireframe</td></tr></table>
    </div>
  </aside>

  <section class="canvas">
    <p class="vplabel">[−][Top][2D Wireframe]</p>

    <div class="cube">
      <svg viewBox="0 0 120 120"><circle cx="60" cy="60" r="45" fill="none" stroke="#2e2e2e" stroke-width="10"/><path d="M39 38h43v43H39z" fill="#a3a3a3"/><path d="M47 46h27v27H47z" fill="#979da3"/><g class="nesw"><text x="60" y="19">N</text><text x="60" y="113">S</text><text x="14" y="66">W</text><text x="107" y="66">E</text></g><text x="60" y="64" class="top">TOP</text></svg>
      <button class="wcs">WCS<i></i></button>
    </div>

    <div class="navbar" role="toolbar" aria-label="Navigation">
      <svg viewBox="0 0 26 177"><g fill="none" stroke="#2a2a2a"><circle cx="21" cy="4" r="2.500"/><path d="M22 17v8a9 9 0 1 1-9-9h9z"/><circle cx="13" cy="25" r="6"/><circle cx="13" cy="25" r="3.500"/><path d="m11 41 2 2 2-2"/><path d="M8 62c-2-4-4-5-4-6 1-1 3 1 4 2l-1-6c1-1 2 0 3 4V52c1-1 2-1 2 3v-3c1-1 2 0 2 3l1-2c1 0 2 1 1 4l3-2c1 1-2 5-3 8-1 4-2 7-6 7-3 0-5-4-6-8z"/><path d="m4 76 12 12M16 76 4 88M4 79v-3h3M4 85v3h3M13 76h3v3"/><circle cx="17" cy="87" r="4"/><path d="m20 90 4 4" stroke-width="2"/><path d="m11 99 2 2 2-2M11 131l2 2 2-2"/><path d="M10 125V110l3-4 3 4v15zM10 114c-8 1-8 6 0 6M16 114c8 1 8 6 0 6l-3 2"/><path d="M4 142h4v4H4zM11 142h4v4h-4zM18 142h4v4h-4zM4 149h13v11H4z"/><circle cx="21" cy="172" r="2.500"/></g><path d="m8 151 5 4-5 4z" fill="#2a2a2a"/></svg>
    </div>

    <svg class="ucs" viewBox="0 0 64 64"><g fill="none" stroke="#d8d8d8"><path d="M6.500 16v41.500H48M2.500 53.500h8v8h-8z"/><path d="m7 1 5 6 5-6M12 7v7M51 46l11 11M62 46 51 57" stroke="#c0c0c0"/></g></svg>

    <div class="history"><p class="fade">Command: MENULOAD</p><p class="mid">Command: YQLANG</p><p>****[Ô´ÈªÉè¼Æ]-yq_lang-ÇĞ»»Ô´ÈªÉè¼ÆÌáÊ¾ÓïÑÔ</p></div>
    <div class="cmd">
      <span class="grip v big-grip"></span>
      <button aria-label="Close"><svg viewBox="0 0 8 8"><path d="m1 1 6 6M7 1 1 7" class="s" stroke-width="1.400"/></svg></button>
      <button aria-label="Customize"><svg viewBox="0 0 14 14" class="wr"><path d="m1 11 6-5c-.5-3 1-5 4-5L9.500 3l.5 1.500 1.500.5L14 3.500c0 3-2 4.500-5 4L3 13.500c-2 .5-3-1-2-2.500z"/></svg></button>
      <div class="field">
        <svg viewBox="0 0 14 12" class="term"><path d="M.5 1.500h13v10H.5z" fill="none" stroke="#444"/><path d="M.5 2h13M3 5l2 1.500L3 8M6 9h3" fill="none" stroke="#444"/></svg><i class="caret dark"></i>
        <input type="text" aria-label="Command" placeholder="Type a command"><i class="caret up"></i>
      </div>
    </div>

    <div class="dialog" role="dialog" aria-labelledby="dlgt">
      <header><h1 id="dlgt">[Ô´ÈªÉè¼Æ]-ÇëÑ¡ÔñÌáÊ¾Óï...</h1><button aria-label="Close dialog"><svg viewBox="0 0 10 10"><path d="m1 1 8 8M9 1 1 9" class="s"/></svg></button></header>
      <label for="lang">ÇĞ»»Ô´ÈªÃüÁî/²Ëµ¥ÌáÊ¾ÓïÑÔ</label>
      <select id="lang" size="12"><option selected>English</option><option>ÖĞÎÄ</option></select>
      <footer><button class="ok">OK</button><button class="cancel">Cancel</button></footer>
    </div>
    <div class="mark"></div>
  </section>

  <aside class="tools">
    <div class="tcol">
      <div class="tgrp"><span class="grip"></span>
        <button aria-label="System"><svg viewBox="0 0 14 14"><use href="#t-wrench"/><text x="1" y="13" class="tx">SYS</text></svg></button><button aria-label="Blocks"><svg><use href="#t-blocks"/></svg></button><button aria-label="Block tools"><svg><use href="#t-blocks2"/></svg></button><hr>
        <button aria-label="Replace"><svg><use href="#t-face"/></svg></button><button aria-label="Translate"><svg><use href="#t-zh"/></svg></button><button aria-label="Units"><svg><use href="#t-mm"/></svg></button><button aria-label="Panel"><svg><use href="#t-panel"/></svg></button><hr>
        <button aria-label="Sort"><svg viewBox="0 0 14 14"><use href="#t-az"/><text x="3" y="7" class="tx red">AZ</text></svg></button><button aria-label="Text tools"><svg viewBox="0 0 14 14"><use href="#t-az2"/><text x="4" y="8" class="tx navy">AZ</text></svg></button><hr>
        <button aria-label="Help"><svg viewBox="0 0 14 14"><use href="#t-help"/><text x="6" y="11" class="q">?</text></svg></button><button aria-label="Save"><svg><use href="#t-save"/></svg></button><button aria-label="Home"><svg><use href="#t-house"/></svg></button><button aria-label="About"><svg><use href="#t-blue"/></svg></button>
      </div>
    </div>
    <div class="tcol">
      <div class="tgrp"><span class="grip"></span>
        <button aria-label="Draw axis"><svg><use href="#t-pencil"/></svg></button><button aria-label="Axis grid"><svg><use href="#t-grid"/></svg></button><hr>
        <button aria-label="Wall"><svg><use href="#t-h"/></svg></button><button aria-label="Trim wall"><svg><use href="#t-scis"/></svg></button><button aria-label="Wall width"><svg><use href="#t-hh"/></svg></button><button aria-label="Offset wall"><svg><use href="#t-h"/><use href="#t-down"/></svg></button><button aria-label="Wall gap"><svg><use href="#t-vv"/></svg></button><hr>
        <button aria-label="Wall line"><svg><use href="#t-h"/><use href="#t-down"/></svg></button><button aria-label="Edit wall"><svg><use href="#t-hand"/></svg></button><hr>
        <button aria-label="Square column"><svg><use href="#t-sq"/></svg></button><button aria-label="Round column"><svg><use href="#t-circ"/></svg></button><button aria-label="L column"><svg><use href="#t-l"/></svg></button><button aria-label="T column"><svg><use href="#t-t"/></svg></button><button aria-label="Cross column"><svg><use href="#t-cross"/></svg></button><hr>
        <button aria-label="Column array"><svg><use href="#t-four"/></svg></button><button aria-label="Replace columns"><svg><use href="#t-three"/></svg></button><button aria-label="Edit column"><svg><use href="#t-circ"/><use href="#t-hand"/></svg></button><hr>
        <button aria-label="Match wall"><svg><use href="#t-brush"/></svg></button>
      </div>
    </div>
    <div class="tcol">
      <div class="tgrp"><span class="grip"></span>
        <button aria-label="Insert door"><svg><use href="#t-door"/><use href="#t-star"/></svg></button><button aria-label="Door"><svg><use href="#t-door"/></svg></button><button aria-label="New window"><svg><use href="#t-wall"/><use href="#t-star"/></svg></button><button aria-label="Window"><svg><use href="#t-wall"/></svg></button><button aria-label="Place window"><svg><use href="#t-wall"/><use href="#t-down"/></svg></button><button aria-label="New opening"><svg><use href="#t-wall"/><use href="#t-star"/></svg></button><hr>
        <button aria-label="Door style"><svg><use href="#t-door"/><use href="#t-star"/></svg></button><button aria-label="Swing door"><svg><use href="#t-door"/></svg></button><button aria-label="Place door"><svg><use href="#t-door"/><use href="#t-down"/></svg></button><hr>
        <button aria-label="Window style"><svg><use href="#t-wall"/><use href="#t-star"/></svg></button><button aria-label="Plain window"><svg><use href="#t-wall"/></svg></button><button aria-label="Bay window"><svg><use href="#t-wall"/><use href="#t-down"/></svg></button><hr>
        <button aria-label="New corner window"><svg><use href="#t-corner"/><use href="#t-star"/></svg></button><button aria-label="Corner window"><svg><use href="#t-corner"/><use href="#t-down"/></svg></button><hr>
        <button aria-label="Sill"><svg viewBox="0 0 14 14"><use href="#t-sill"/><text x="1" y="6" class="tx red">Sill</text></svg></button><button aria-label="Window number"><svg viewBox="0 0 14 14"><use href="#t-wall"/><text x="1" y="6" class="tx red">C01</text></svg></button><hr>
        <button aria-label="Lower"><svg><use href="#t-wall"/><use href="#t-down"/></svg></button><button aria-label="Shift"><svg><use href="#t-right"/></svg></button><button aria-label="Shift copy"><svg><use href="#t-right"/></svg></button><hr>
        <button aria-label="Replace window"><svg><use href="#t-wall"/><use href="#t-down"/></svg></button><button aria-label="Move"><svg><use href="#t-mv"/></svg></button><button aria-label="Rotate"><svg><use href="#t-rot"/></svg></button><button aria-label="Mirror"><svg><use href="#t-mir"/></svg></button><hr>
        <button aria-label="Flip"><svg><use href="#t-ru"/></svg></button><button aria-label="Edit opening"><svg><use href="#t-hand"/></svg></button><hr>
        <button aria-label="Match"><svg><use href="#t-brush"/></svg></button><hr>
        <button aria-label="Label"><svg viewBox="0 0 14 14"><use href="#t-wall"/><text x="1" y="6" class="tx red">C01</text></svg></button>
      </div>
      <div class="tgrp"><span class="grip"></span>
        <button class="gou">构</button><hr>
        <button aria-label="Stair"><svg><use href="#t-stair"/></svg></button><button aria-label="Double stair"><svg><use href="#t-stairs2"/></svg></button><button aria-label="Arc stair"><svg><use href="#t-fan"/></svg></button><button aria-label="Lift"><svg><use href="#t-lift"/></svg></button><hr>
        <button aria-label="Balcony"><svg><use href="#t-stairs2"/></svg></button>
      </div>
    </div>
  </aside>
</main>

<section class="status">
  <nav class="layouts" aria-label="Layouts">
    <button class="burger" aria-label="Layout menu"><i></i><i></i><i></i></button>
    <a href="#" class="skew model"><b>Model</b></a><a href="#">Layout1</a><span class="slash"></span><a href="#">Layout2</a><span class="slash"></span>
    <button class="plus" aria-label="New layout"><svg viewBox="0 0 12 12"><path d="M6 0v12M0 6h12" class="s" stroke-width="1.600"/></svg></button><span class="slash"></span>
  </nav>
  <div class="stbtns">
    <button class="coords">3362.6062, 1560.7351, 0.0000</button>
    <button class="mdl">MODEL</button>
    <button class="on" aria-label="Grid"><svg><use href="#u-grid"/></svg></button>
    <button class="drop" aria-label="Snap"><svg><use href="#u-dots"/></svg><i class="caret"></i></button>
    <button aria-label="Infer constraints"><svg><use href="#u-infer"/></svg></button>
    <button class="on" aria-label="Dynamic input"><svg><use href="#u-dyn"/></svg></button>
    <button aria-label="Ortho"><svg><use href="#u-ortho"/></svg></button>
    <button class="drop" aria-label="Polar"><svg><use href="#u-polar"/></svg><i class="caret"></i></button>
    <button class="drop" aria-label="Isodraft"><svg><use href="#u-iso"/></svg><i class="caret"></i></button>
    <button class="on" aria-label="Tracking"><svg><use href="#u-ang"/></svg></button>
    <button class="on drop" aria-label="Object snap"><svg><use href="#u-osnap"/></svg><i class="caret"></i></button>
    <button aria-label="Lineweight display"><svg><use href="#u-lw"/></svg></button>
    <button class="on" aria-label="Transparency"><svg><use href="#u-trans"/></svg></button>
    <button class="on" aria-label="Selection cycling"><svg><use href="#u-cyc"/></svg></button>
    <button class="drop" aria-label="3D snap"><svg><use href="#u-cube"/></svg><i class="caret"></i></button>
    <button class="on" aria-label="Dynamic UCS"><svg><use href="#u-ucs"/></svg></button>
    <button class="drop" aria-label="Selection filter"><svg><use href="#u-cube2"/></svg><i class="caret"></i></button>
    <button class="on drop" aria-label="Gizmo"><svg><use href="#u-orb"/></svg><i class="caret"></i></button>
    <button class="on" aria-label="Annotation visibility"><svg><use href="#u-ann1"/></svg></button>
    <button aria-label="Auto scale"><svg><use href="#u-ann2"/></svg></button>
    <button aria-label="Annotative"><svg><use href="#u-ann"/></svg></button>
    <button class="scale">1:1<i class="caret"></i></button>
    <button class="drop" aria-label="Workspace"><svg><use href="#u-gear"/></svg><i class="caret"></i></button>
    <button aria-label="Annotation monitor"><svg><use href="#u-plus"/></svg></button>
    <button class="units"><svg><use href="#u-ruler"/></svg>Decimal<i class="caret"></i></button>
    <button class="w20" aria-label="Quick properties"><svg><use href="#u-qp"/></svg></button>
    <button class="drop" aria-label="Lock UI"><svg><use href="#u-lock"/></svg><i class="caret"></i></button>
    <button class="w20" aria-label="Isolate objects"><svg><use href="#u-iso2"/></svg></button>
    <button class="dim w20" aria-label="Graphics performance"><svg><use href="#u-perf"/></svg></button>
    <button class="w20" aria-label="Clean screen"><svg><use href="#u-full"/></svg></button>
    <button class="last" aria-label="Customization"><svg><use href="#u-menu"/></svg></button>
  </div>
</section>

<footer class="taskbar">
  <button class="weather"><svg viewBox="0 0 24 26"><circle cx="10" cy="14" r="8.500" fill="#f0a32a"/><path d="M6 25a4.500 4.500 0 0 1-.5-8.500 5.500 5.500 0 0 1 9.500-1.500 4 4 0 0 1 4.500 5A3 3 0 0 1 18 25z" fill="#bcd3f5"/><circle cx="16" cy="7" r="6.500" fill="#f7929c"/><text x="16" y="10" class="bd">5</text></svg><span><b>11°C</b>Kısmen güneşli</span></button>
  <div class="apps">
    <button class="app" aria-label="Start"><svg viewBox="0 0 20 20"><path d="M0 0h9.500v9.500H0zM10.500 0H20v9.500h-9.500zM0 10.500h9.500V20H0zM10.500 10.500H20V20h-9.500z" fill="#3db4f4"/></svg></button>
    <label class="search"><svg viewBox="0 0 14 14"><circle cx="6" cy="6" r="4.700" fill="none" stroke="#eee" stroke-width="1.300"/><path d="m9.500 9.500 4 4" stroke="#eee" stroke-width="1.300"/></svg><input type="search" aria-label="Ara" placeholder="Ara"><svg viewBox="0 0 38 20" class="fair"><path d="M2 18C0 8 10 2 14 3c8-4 20-1 24 8l-1 8z" fill="#a9cdea"/><path d="M2 10c3-5 7-5 9-3M28 5c4 0 7 3 8 6" stroke="#f3b8c8" stroke-width="3" fill="none"/><path d="m1 19 3-10 4 10zM30 19l4-10 4 10z" fill="#2c7a48"/><path d="M9 8 19 2l10 6z" fill="#e8703c"/><path d="M13 8 19 2l2 6z" fill="#f7d36a"/><path d="M9 8h20v2H9z" fill="#3a8fc8"/><path d="M17 10h4v7h-4z" fill="#e8a23c"/><path d="M11 10v6M14 10v6M24 10v6M27 10v6" stroke="#fff"/><path d="M9 16h20v3H9z" fill="#e89048"/></svg></label>
    <button class="app" aria-label="Task view"><svg viewBox="0 0 20 20"><path d="M6 1h14v13H6z" fill="#f4f4f4"/><path d="M0 7h13v12H0z" fill="#8a8a8a"/></svg></button>
    <button class="app" aria-label="Photoshop"><svg viewBox="0 0 20 20"><rect x="1" y="1" width="18" height="18" rx="3" fill="#001e36"/><text x="4" y="13" class="ps">Ps</text></svg></button>
    <button class="app" aria-label="Remote desktop"><svg viewBox="0 0 20 20"><circle cx="10" cy="10" r="10" fill="#dfe3e6"/><path d="M3 5h14v8H3z" fill="#e84a78"/><path d="M7 15h6v1H7z" fill="#888"/><path d="m11 7 5 5-2 .2.800 1.800-1 .4-.9-1.800-1.900 1z" fill="#fff"/></svg></button>
    <button class="app run" aria-label="File explorer"><svg viewBox="0 0 20 20"><path d="M0 3 1 1h7l2 3h9v15H0z" fill="#e8a820"/><path d="M0 6h20v13H0z" fill="#ffd659"/><path d="M4 13h12v6H4z" fill="#1976d2"/><path d="M6 16h8v3H6z" fill="#0d5ba8"/></svg></button>
    <button class="app run" aria-label="Security"><svg viewBox="0 0 20 20"><path d="M10 0c3 2 6 3 9 3 1 9-3 14-9 17C4 17 0 12 1 3c3 0 6-1 9-3z" fill="#1c6fd0"/><path d="M10 0v10H1.300C.8 8 .8 5 1 3c3 0 6-1 9-3z" fill="#4cb4f0"/><path d="M10 10h8.700C17.500 15 14 18 10 20z" fill="#0f4ea0"/></svg></button>
    <button class="app run" aria-label="Opera"><svg viewBox="0 0 20 20"><ellipse cx="10" cy="10" rx="9.500" ry="10" fill="#f0142c"/><ellipse cx="10" cy="10" rx="4.200" ry="7" fill="#2b2b2b"/></svg></button>
    <button class="app run cur" aria-label="AutoCAD"><svg viewBox="0 0 20 20"><path d="M0 2 3 0v18l-3-2z" fill="#8a0a34"/><path d="M2 0h17v19H2z" fill="#e3124f"/><path d="M4 14h13v5H4z" fill="#6a0a26"/><text x="10.500" y="11" class="aa">A</text><text x="10.500" y="18" class="cad">CAD</text></svg></button>
  </div>
  <div class="tray">
    <button aria-label="Hidden icons"><svg viewBox="0 0 14 14"><path d="m3 9 4-4 4 4" class="s" stroke-width="1.600"/></svg></button>
    <button aria-label="Network"><svg viewBox="0 0 14 14"><path d="M1 6a8.500 8.500 0 0 1 12 0M3 8.300a5.500 5.500 0 0 1 8 0M5 10.300a3 3 0 0 1 4 0" class="s" stroke-width="1.300"/><circle cx="7" cy="12" r="1.200"/></svg></button>
    <button aria-label="Sound"><svg viewBox="0 0 14 14"><path d="M.5 5h2.500l3-3v10L3 9H.5zM8 5c1 1.500 1 2.500 0 4M10 3.500c2 2.500 2 4.500 0 7M12 2c2.500 3.500 2.500 6.500 0 10" class="s"/></svg></button>
    <button class="clock">18:28<br>20.09.2025</button>
  </div>
</footer>
</body>
</html>
```

FILE: styles.css
```css
:root {
  --bar: #222933;
  --panel: #3b4453;
  --head: #2e3440;
  --txt: #d4d7dc;
  --off: #767d88;
  --on: #5b8cc4;
}
* { box-sizing: border-box; }
body {
  margin: 0;
  height: 100vh;
  display: flex;
  flex-direction: column;
  overflow: hidden;
  background: var(--bar);
  color: var(--txt);
  font: 10px/14px Roboto, "Noto Sans", sans-serif;
}
button, input, select { font: inherit; color: inherit; background: none; border: 0; padding: 0; margin: 0; }
a { color: inherit; text-decoration: none; }
p, h1, h2, h3 { margin: 0; font: inherit; }
svg { display: block; fill: currentColor; flex: none; }
.s { fill: none; stroke: currentColor; }
.defs { position: absolute; width: 0; height: 0; }
.caret { flex: none; border: 3px solid transparent; border-top-color: currentColor; border-bottom: 0; color: #d4d7dc; }

/* menu and ribbon tabs */
.menubar { flex: none; height: 21px; display: flex; gap: 20px; align-items: center; padding: 5px 0 0 10px; border-bottom: 1px solid var(--panel); }
.menubar .tight { margin-left: -5px; }
.winctl { margin-left: auto; display: flex; gap: 17px; padding-right: 7px; }
.winctl svg { width: 10px; height: 10px; }
.tabs { flex: none; height: 20px; display: flex; align-items: flex-end; padding-left: 3px; }
.tabs a { padding: 2px 8px 1px; }
.tabs .on { background: var(--panel); color: #fff; }
.minirib { display: flex; align-items: center; gap: 4px; padding: 0 0 5px 17px; }
.minirib svg { width: 13px; height: 7px; }

/* ribbon */
.ribbon { flex: none; display: flex; background: var(--panel); color: var(--off); border-bottom: 1px solid #303846; }
.panel { flex: none; display: flex; flex-direction: column; justify-content: space-between; height: 82px; padding: 4px 2px 1px; border-right: 1px solid #262e39; }
.p-draw { width: 188px; padding-left: 1px; }
.p-modify { width: 209px; padding-left: 5px; }
.p-anno { width: 157px; }
.p-layers { width: 228px; }
.p-block { width: 167px; }
.p-props { width: 222px; }
.p-groups { width: 57px; padding: 4px 0 1px; }
.p-util { width: 81px; padding-left: 4px; }
.p-clip { width: 76px; padding-left: 0; }
.p-view { border: 0; padding-left: 0; }
.body { display: flex; height: 60px; }
.big { flex: none; display: flex; flex-direction: column; align-items: center; text-align: center; padding-top: 2px; line-height: 12px; }
.big svg { width: 28px; height: 28px; margin-bottom: 3px; }
.big .caret { margin-top: 2px; }
.w30 { width: 30px; }
.w34 { width: 34px; }
.w36 { width: 36px; }
.w38 { width: 38px; }
.w44 { width: 44px; }
.w52 { width: 52px; }
.w58 { width: 58px; }
.w60 { width: 60px; }
.w62 { width: 62px; }
.col { display: flex; flex-direction: column; align-items: flex-start; }
.col.pad { padding-left: 2px; }
.col.wide { padding-left: 4px; }
.grow { flex: 1; align-items: stretch; }
.sm { display: flex; align-items: center; gap: 4px; height: 20px; white-space: nowrap; }
.sm svg { width: 14px; height: 14px; }
.sm .caret { margin-left: 2px; }
.spread .sm { width: 54px; }
.spread .caret { margin-left: auto; }
.bright { color: #a9aeb6; }
.sq { width: 21px; justify-content: center; }
.sel { background: #41566f; outline: 1px solid var(--on); outline-offset: -1px; }
.icons { display: flex; gap: 6px; padding-left: 2px; }
.combo { display: flex; align-items: center; gap: 3px; height: 18px; margin: 1px 0; padding: 0 3px 0 6px; background: #465163; border: 1px solid #2f3846; }
.combo select, .picker select { flex: 1; min-width: 0; appearance: none; }
.combo.off { background: #404959; border-color: #3d4655; }
.combo.off .caret { color: var(--off); }
.combo.layer { width: 172px; padding-left: 2px; gap: 2px; }
.combo.layer svg { width: 14px; height: 14px; }
.amber { color: #b39a62; }
.swatch { flex: none; width: 13px; height: 13px; background: #6a717d; }
.swatch.light { width: 12px; background: #a4a9b2; margin: 0 3px; }
.rule { width: 53px; height: 1px; background: #9aa1ab; }
.ttl { display: flex; justify-content: center; align-items: center; gap: 6px; color: #e6e8ec; }
.ttl .caret { border-width: 4px 3px 0; }
.ttlrow { display: flex; align-items: center; }
.ttlrow .ttl { flex: 1; }
.ttlrow.left .ttl { flex: none; padding-left: 4px; }
.ttlrow.left { gap: 7px; }
.launch svg { width: 7px; height: 7px; color: #b5bac3; }

/* file and layout tabs */
.doctabs { flex: none; height: 22px; display: flex; align-items: center; padding: 2px 0 0 13px; color: #f0f1f3; }
.burger { display: flex; flex-direction: column; gap: 3px; width: 14px; }
.burger i { height: 2px; width: 14px; background: #e4e6e9; }
.slash { width: 1px; height: 13px; margin: 0 11px; background: #59616e; transform: skewX(-22deg); }
.doctabs .slash:nth-child(2) { margin: 0 9px 0 11px; }
.start { width: 30px; }
.skew { position: relative; z-index: 0; display: flex; align-items: center; color: #fff; }
.skew::before { content: ""; position: absolute; inset: 0 3px; z-index: -1; background: var(--panel); transform: skewX(-20deg); }
.doc { align-self: flex-end; height: 20px; gap: 10px; padding: 0 10px; }
.doc svg, .cmd button svg { width: 8px; height: 8px; }
.plus svg { width: 12px; height: 12px; }
.doctabs .plus { margin-left: 7px; }

/* work area */
.work { flex: 1; min-height: 0; display: flex; background: var(--panel); }
.palette { flex: none; width: 284px; padding-top: 5px; }
.palette h2 { display: flex; align-items: center; gap: 4px; height: 17px; width: 281px; padding: 0 5px 2px; background: var(--head); border-radius: 3px 3px 0 0; }
.grip { display: block; width: 12px; height: 3px; background: repeating-linear-gradient(90deg, #6a7280 0 1px, transparent 1px 2px); }
.grip.v { width: 3px; height: 8px; background: repeating-linear-gradient(#8b929d 0 1px, transparent 1px 2px); }
.pbody { padding: 10px 12px 0 14px; }
.selrow { display: flex; align-items: center; gap: 6px; margin-bottom: 2px; }
.selrow svg { width: 14px; height: 14px; }
.picker { display: flex; align-items: center; width: 198px; height: 20px; padding: 0 3px 0 3px; background: #4b566b; border: 1px solid #2f3744; }
.pbody h3 { display: flex; align-items: center; justify-content: space-between; height: 16px; padding: 0 6px; background: var(--head); color: #fff; font-weight: 700; }
.pbody h3 .caret, .picker .caret { border-width: 4px 4px 0; color: #f0f1f3; }
.pbody table { width: 244px; margin: 0 0 1px 14px; border-collapse: collapse; table-layout: fixed; }
.pbody tr { height: 16px; }
.pbody th, .pbody td { padding: 0 0 0 5px; border: 1px solid #323a48; font-weight: 400; text-align: left; line-height: 13px; height: 16px; white-space: nowrap; }
.pbody th { width: 111px; }
.pbody td { padding-left: 2px; color: #e6e8ec; }
.pbody td.ro { color: #8f959f; }
.pbody .swatch, .pbody .rule { display: inline-block; vertical-align: middle; background: #fff; }
.pbody .swatch { width: 12px; height: 12px; margin-right: 5px; }
.pbody .rule { width: 55px; margin-right: 3px; }

.canvas {
  position: relative;
  flex: 1;
  min-width: 0;
  margin: 3px 0;
  background-color: #000;
  background-image:
    linear-gradient(90deg, #20242f 1px, transparent 1px),
    linear-gradient(#20242f 1px, transparent 1px),
    linear-gradient(90deg, #13151d 1px, transparent 1px),
    linear-gradient(#13151d 1px, transparent 1px);
  background-size: 65px 65px, 65px 65px, 13px 13px, 13px 13px;
  background-position: 43px 57px, 43px 57px, 4px 5px, 4px 5px;
}
.vplabel { padding: 5px 3px; color: #e2e2e2; }
.cube { position: absolute; top: 9px; right: 9px; width: 120px; display: flex; flex-direction: column; align-items: center; gap: 13px; }
.cube svg { width: 120px; height: 120px; }
.nesw { font: bold 17px "Liberation Sans", Arial, sans-serif; text-anchor: middle; fill: #a9a9a9; }
.top { font: bold 10px Roboto, sans-serif; text-anchor: middle; fill: #3c4046; }
.wcs { display: flex; align-items: center; justify-content: center; gap: 5px; width: 39px; height: 14px; background: #80808c; border: 1px solid #9898a2; border-radius: 4px; color: #34343a; font: 9px/12px "Liberation Sans", sans-serif; }
.wcs i { border: 3px solid transparent; border-top: 4px solid #a6a6b0; border-bottom: 0; }
.navbar { position: absolute; top: 177px; right: 3px; width: 26px; background: #4c4c4c; border: 1px solid #5a5a5a; border-radius: 3px; }
.navbar svg { width: 24px; height: 175px; }
.ucs { position: absolute; left: 10px; bottom: 10px; width: 64px; height: 64px; }

.history { position: absolute; left: 329px; bottom: 24px; display: flex; flex-direction: column; align-items: flex-start; gap: 4px; font: 10px/13px "DejaVu Sans Mono", "Liberation Mono", monospace; }
.history p { padding: 0 1px; background: #3a3a3a; color: #b4b4b4; border-radius: 2px; }
.history .fade { color: #7c7c7c; background: #313131; }
.history .mid { color: #969696; }
.cmd { position: absolute; left: 276px; right: 275px; bottom: 1px; height: 21px; display: flex; align-items: center; background: #1f2530; color: #c8cbd0; }
.grip.big-grip { height: 14px; width: 4px; margin: 0 6px 0 3px; }
.cmd button { margin-right: 8px; }
.cmd button .wr { width: 14px; height: 14px; }
.cmd button + button { margin-right: 5px; }
.field { flex: 1; display: flex; align-items: center; gap: 2px; height: 21px; padding: 0 3px; background: rgba(190, 190, 190, .93); color: #555; font: italic 10px/14px "DejaVu Sans Mono", "Liberation Mono", monospace; }
.term { width: 14px; height: 12px; }
.field input { flex: 1; min-width: 0; padding-left: 3px; outline: 0; }
.field input::placeholder { color: #555; opacity: 1; }
.caret.dark { color: #444; }
.caret.up { color: #444; transform: rotate(180deg); }

.dialog { position: absolute; left: 432px; top: 143px; width: 169px; padding: 0 6px 6px 7px; background: #f0f0f0; border-radius: 6px; color: #1a1a1a; }
.dialog header { display: flex; align-items: center; justify-content: space-between; height: 24px; margin: 0 -6px 3px -7px; padding: 0 8px 0 7px; background: #eef2fb; border-radius: 6px 6px 0 0; }
.dialog header svg { width: 10px; height: 10px; }
.dialog label { display: block; line-height: 16px; white-space: nowrap; }
.dialog select { display: block; width: 157px; height: 154px; appearance: none; background: #fff; border: 1px solid #333; border-radius: 0; overflow: hidden; outline: 0; }
.dialog option { min-height: 11px; padding: 0 1px; line-height: 11px; font-size: 10px; }
.dialog option:checked { background: #0078d7 linear-gradient(#0078d7, #0078d7); color: #fff; -webkit-text-fill-color: #fff; }
.dialog footer { display: flex; justify-content: center; gap: 24px; padding: 11px 0 0; }
.dialog footer button { height: 17px; background: #fdfdfd; border: 1px solid #d0d0d0; border-radius: 3px; }
.dialog .ok { width: 40px; border-color: #0067c0; }
.dialog .cancel { width: 45px; }
.mark { position: absolute; left: 319px; top: 160px; width: 344px; height: 42px; border: 3px solid #e81c1c; pointer-events: none; }

/* tool columns */
.tools { flex: none; width: 73px; display: flex; gap: 2px; padding: 3px 0 3px 4px; overflow: hidden; }
.tcol { width: 21px; overflow: hidden; }
.tgrp { display: flex; flex-direction: column; align-items: center; gap: 4px; padding: 2px 0 1px; border: 1px solid #2f3846; border-top-color: #343d4b; }
.tgrp button { width: 14px; height: 14px; background: #f1eee0; border-radius: 1px; }
.tgrp svg { width: 14px; height: 14px; }
.tgrp hr { width: 16px; height: 2px; margin: 0; border: 0; background: #d3d5da; }
.tgrp .gou { background: #fff; border: 1px solid #2c60b8; color: #e8141c; font: bold 11px/12px "Noto Sans CJK SC", sans-serif; }
.tx { font: bold 6px "Liberation Sans", sans-serif; fill: #111; }
.tx.red { fill: #e8141c; }
.tx.navy { fill: #0c4a90; }
.q { font: bold 11px "Liberation Sans", sans-serif; fill: #fff; }

/* status bar */
.status { flex: none; height: 24px; display: flex; justify-content: space-between; align-items: center; border-bottom: 1px solid #323a45; }
.layouts { display: flex; align-items: center; height: 100%; padding-left: 13px; color: #e6e8ec; }
.model { align-self: flex-start; height: 20px; margin: 0 6px 0 8px; padding: 2px 14px 0; }
.stbtns { display: flex; gap: 2px; }
.stbtns button { display: flex; align-items: center; justify-content: center; width: 19px; height: 20px; background: #343d4b; color: #dcdee2; white-space: nowrap; }
.stbtns svg { width: 15px; height: 15px; }
.stbtns .on { background: var(--on); color: #fff; }
.stbtns .w20 { width: 20px; }
.stbtns .dim { background: #4a6b96; }
.stbtns .drop { width: 32px; gap: 5px; }
.stbtns .on.drop { background: linear-gradient(90deg, var(--on) 19px, #343d4b 19px); }
.stbtns .coords { width: 150px; padding-left: 6px; }
.stbtns .mdl { width: 39px; }
.stbtns .coords, .stbtns .mdl { color: #f0f1f3; }
.stbtns .scale { width: 26px; gap: 3px; }
.stbtns .units { width: 83px; gap: 6px; }
.units .caret { margin-left: 5px; }
.stbtns .last { width: 21px; }

/* taskbar */
.taskbar { flex: none; height: 40px; display: grid; grid-template-columns: 1fr auto 1fr; align-items: center; background: #2b2b2b; border-top: 1px solid #3a3a3a; color: #f0f0f0; }
.weather { display: flex; align-items: center; gap: 2px; padding-left: 16px; text-align: left; line-height: 13px; }
.weather svg { width: 24px; height: 26px; }
.weather b { display: block; font-weight: 400; }
.bd { font: 8px Roboto, sans-serif; text-anchor: middle; fill: #2b2b2b; }
.apps { display: flex; align-items: center; gap: 3px; }
.app { position: relative; display: flex; align-items: center; justify-content: center; width: 34px; height: 34px; border-radius: 4px; }
.app svg { width: 20px; height: 20px; }
.run::after { content: ""; position: absolute; bottom: 1px; width: 5px; height: 2px; border-radius: 1px; background: #9a9a9a; }
.cur { background: #383838; }
.cur::after { width: 13px; background: #f58a80; }
.search { display: flex; align-items: center; gap: 9px; width: 184px; height: 28px; padding: 0 4px 0 10px; background: #424242; border: 1px solid #4c4c4c; border-radius: 14px; font-size: 11px; }
.search svg { width: 13px; height: 13px; }
.search .fair { width: 38px; height: 20px; }
.search input { flex: 1; min-width: 0; outline: 0; appearance: none; }
.search input::placeholder { color: #d8d8d8; opacity: 1; }
.ps { font: bold 9px Roboto, sans-serif; fill: #31a8ff; }
.aa { font: bold 11px Roboto, sans-serif; text-anchor: middle; fill: #fff; }
.cad { font: bold 4px Roboto, sans-serif; text-anchor: middle; fill: #fff; }
.tray { display: flex; align-items: center; justify-content: flex-end; gap: 6px; padding-right: 15px; }
.tray svg { width: 14px; height: 14px; }
.tray button:first-child { margin-right: 7px; }
.clock { margin-left: 5px; text-align: right; line-height: 14px; }
```
